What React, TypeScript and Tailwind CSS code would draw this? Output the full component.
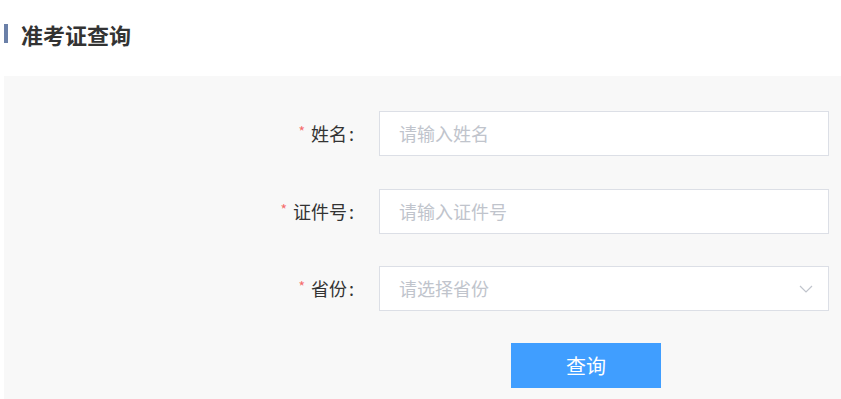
export default function App() {
  const rows = [
    { label: '姓名', placeholder: '请输入姓名', select: false },
    { label: '证件号', placeholder: '请输入证件号', select: false },
    { label: '省份', placeholder: '请选择省份', select: true },
  ]

  return (
    <div
      className="w-[841px] h-[399px] overflow-hidden bg-white"
      style={{ fontFamily: '"Microsoft YaHei", "Noto Sans CJK SC", sans-serif' }}
    >
      {/* Title */}
      <div className="flex items-center h-[76px] pl-[4px] pb-[9px]">
        <span className="w-[4px] h-[19px] bg-[#6b80a8]" />
        <h1 className="ml-[13px] text-[22px] font-bold text-[#333] leading-none">准考证查询</h1>
      </div>

      {/* Form panel */}
      <div className="ml-[4px] bg-[#f8f8f8] pt-[35px] pb-[20px]">
        <div className="flex flex-col gap-[32px]">
          {rows.map((r, i) => (
            <div key={r.label} className={'flex items-center h-[45px]' + (i === 0 ? ' mb-[1px]' : '')}>
              <div className="w-[350px] flex justify-end items-center text-[18px] text-[#333]">
                <span className="text-[#f56c6c] text-[14px] mr-[6px] mt-[-4px]">*</span>
                <span>{r.label}</span>
                <span className="ml-[2px]">:</span>
              </div>
              <div className="ml-[25px] w-[450px] h-[45px] bg-white border border-[#dcdfe6] flex items-center pl-[19px] pr-[16px]">
                <span className="flex-1 text-[18px] text-[#c0c4cc]">{r.placeholder}</span>
                {r.select && (
                  <svg width="14" height="8" viewBox="0 0 14 8" fill="none" className="mr-[-1px]">
                    <path d="M1 1l6 6 6-6" stroke="#c0c4cc" strokeWidth="1.2" />
                  </svg>
                )}
              </div>
            </div>
          ))}
          <div className="flex">
            <button className="ml-[507px] w-[150px] h-[45px] bg-[#409eff] text-white text-[20px]">查询</button>
          </div>
        </div>
      </div>
    </div>
  )
}
